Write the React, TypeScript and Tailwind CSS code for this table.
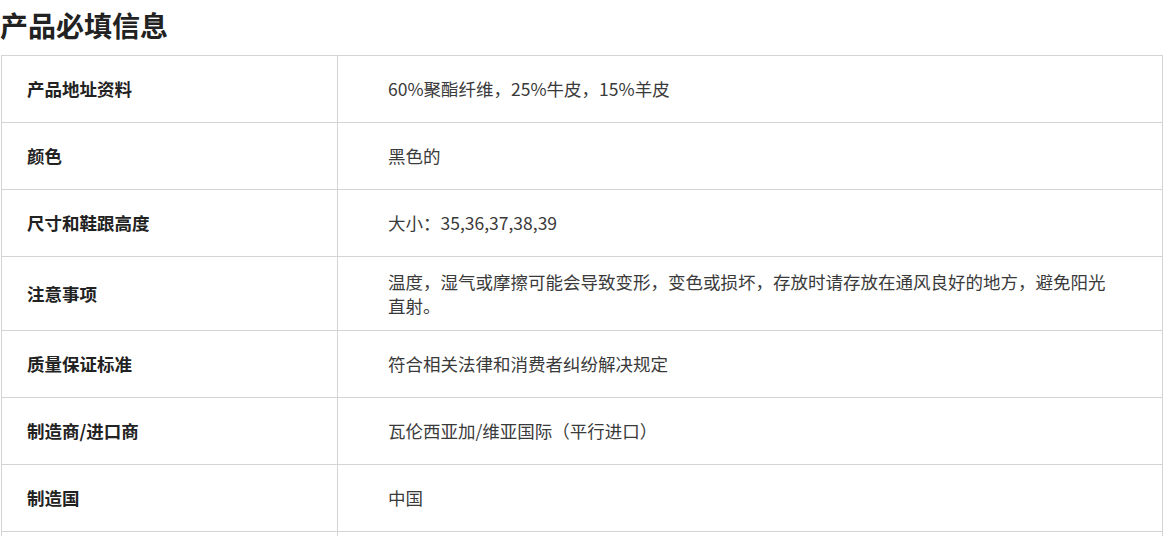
const rows: { label: string; value: string }[] = [
  { label: '产品地址资料', value: '60%聚酯纤维，25%牛皮，15%羊皮' },
  { label: '颜色', value: '黑色的' },
  { label: '尺寸和鞋跟高度', value: '大小：35,36,37,38,39' },
  {
    label: '注意事项',
    value: '温度，湿气或摩擦可能会导致变形，变色或损坏，存放时请存放在通风良好的地方，避免阳光直射。',
  },
  { label: '质量保证标准', value: '符合相关法律和消费者纠纷解决规定' },
  { label: '制造商/进口商', value: '瓦伦西亚加/维亚国际（平行进口）' },
  { label: '制造国', value: '中国' },
  { label: '', value: '' },
];

export default function App() {
  return (
    <div
      className="w-[1173px] h-[536px] overflow-hidden bg-white text-[#333]"
      style={{ fontFamily: '"Noto Sans CJK SC", "Noto Sans", sans-serif' }}
    >
      <h2 className="pt-[7px] mb-[12px] text-[28px] leading-[36px] font-bold text-[#222]">
        产品必填信息
      </h2>
      <div className="ml-[1px] w-[1162px] border-t border-l border-r border-[#d4d4d4]">
        {rows.map((r, i) => (
          <div key={i} className="flex min-h-[67px] border-b border-[#d4d4d4]">
            <div className="w-[336px] shrink-0 flex items-center pl-[25px] border-r border-[#d4d4d4] text-[17.5px] leading-[24px] font-bold text-[#222]">
              {r.label}
            </div>
            <div className="flex-1 flex items-center pl-[50px] pr-[50px] py-[12.5px] text-[17.5px] leading-[24px] text-[#3a3a3a]">
              {r.value}
            </div>
          </div>
        ))}
      </div>
    </div>
  );
}
